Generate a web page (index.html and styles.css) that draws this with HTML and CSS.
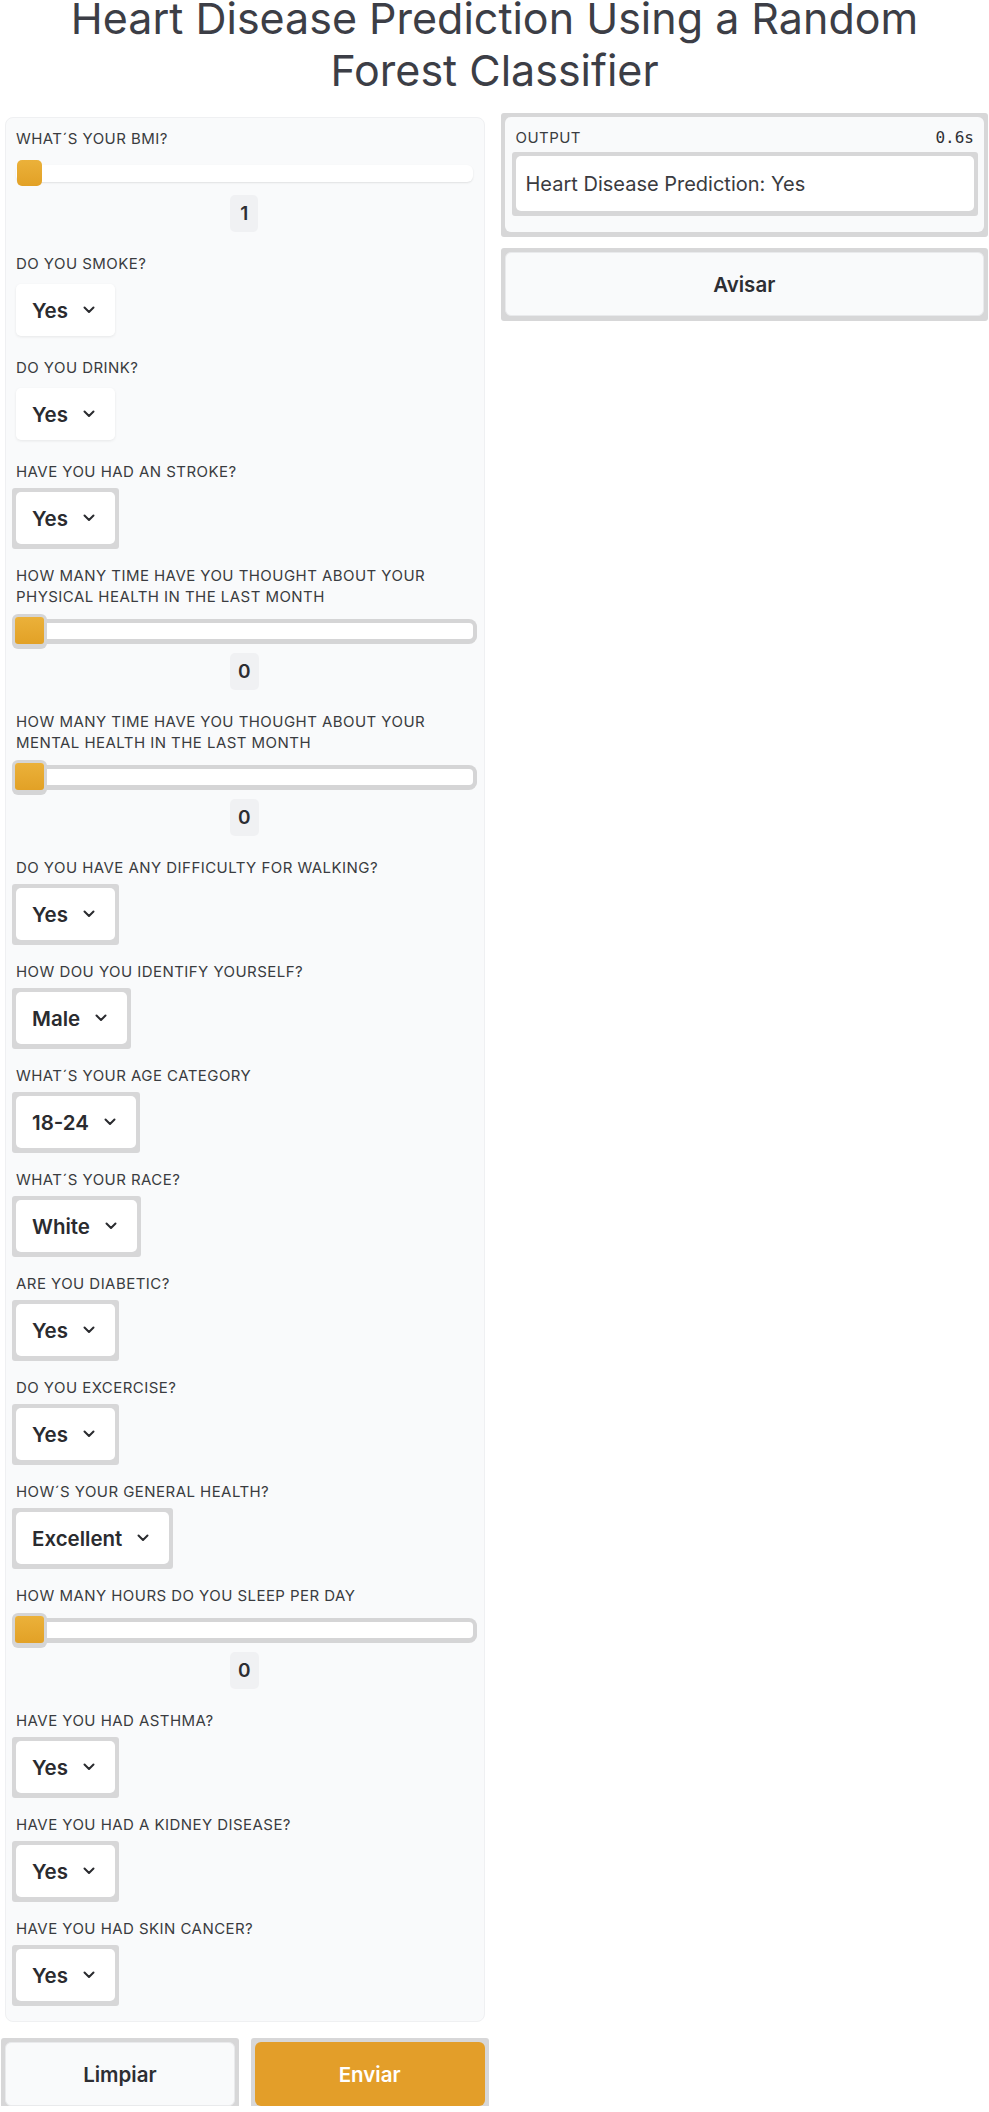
FILE: index.html
```html
<!DOCTYPE html>
<html lang="en">
<head>
<meta charset="utf-8">
<title>Heart Disease Prediction</title>
<link rel="stylesheet" href="styles.css">
</head>
<body>
<div class="page">
  <h1 class="title">Heart Disease Prediction Using a Random<br>Forest Classifier</h1>
  <div class="layout">
    <div class="col">
      <div class="panel">
        <div class="field slider-field">
          <div class="label">WHAT´S YOUR BMI?</div>
          <div class="slider"><div class="track"></div><div class="thumb"></div></div>
          <div class="value">1</div>
        </div>
        <div class="field">
          <div class="label">DO YOU SMOKE?</div>
          <div class="select">Yes<svg class="chev" viewBox="0 0 12 8"><path d="M1.5 1.5 L6 6 L10.5 1.5"/></svg></div>
        </div>
        <div class="field">
          <div class="label">DO YOU DRINK?</div>
          <div class="select">Yes<svg class="chev" viewBox="0 0 12 8"><path d="M1.5 1.5 L6 6 L10.5 1.5"/></svg></div>
        </div>
        <div class="field">
          <div class="label">HAVE YOU HAD AN STROKE?</div>
          <div class="frame"><div class="select">Yes<svg class="chev" viewBox="0 0 12 8"><path d="M1.5 1.5 L6 6 L10.5 1.5"/></svg></div></div>
        </div>
        <div class="field slider-field">
          <div class="label">HOW MANY TIME HAVE YOU THOUGHT ABOUT YOUR PHYSICAL HEALTH IN THE LAST MONTH</div>
          <div class="slider framed"><div class="track"></div><div class="thumb"></div></div>
          <div class="value">0</div>
        </div>
        <div class="field slider-field">
          <div class="label">HOW MANY TIME HAVE YOU THOUGHT ABOUT YOUR MENTAL HEALTH IN THE LAST MONTH</div>
          <div class="slider framed"><div class="track"></div><div class="thumb"></div></div>
          <div class="value">0</div>
        </div>
        <div class="field">
          <div class="label">DO YOU HAVE ANY DIFFICULTY FOR WALKING?</div>
          <div class="frame"><div class="select">Yes<svg class="chev" viewBox="0 0 12 8"><path d="M1.5 1.5 L6 6 L10.5 1.5"/></svg></div></div>
        </div>
        <div class="field">
          <div class="label">HOW DOU YOU IDENTIFY YOURSELF?</div>
          <div class="frame"><div class="select">Male<svg class="chev" viewBox="0 0 12 8"><path d="M1.5 1.5 L6 6 L10.5 1.5"/></svg></div></div>
        </div>
        <div class="field">
          <div class="label">WHAT´S YOUR AGE CATEGORY</div>
          <div class="frame"><div class="select">18-24<svg class="chev" viewBox="0 0 12 8"><path d="M1.5 1.5 L6 6 L10.5 1.5"/></svg></div></div>
        </div>
        <div class="field">
          <div class="label">WHAT´S YOUR RACE?</div>
          <div class="frame"><div class="select">White<svg class="chev" viewBox="0 0 12 8"><path d="M1.5 1.5 L6 6 L10.5 1.5"/></svg></div></div>
        </div>
        <div class="field">
          <div class="label">ARE YOU DIABETIC?</div>
          <div class="frame"><div class="select">Yes<svg class="chev" viewBox="0 0 12 8"><path d="M1.5 1.5 L6 6 L10.5 1.5"/></svg></div></div>
        </div>
        <div class="field">
          <div class="label">DO YOU EXCERCISE?</div>
          <div class="frame"><div class="select">Yes<svg class="chev" viewBox="0 0 12 8"><path d="M1.5 1.5 L6 6 L10.5 1.5"/></svg></div></div>
        </div>
        <div class="field">
          <div class="label">HOW´S YOUR GENERAL HEALTH?</div>
          <div class="frame"><div class="select">Excellent<svg class="chev" viewBox="0 0 12 8"><path d="M1.5 1.5 L6 6 L10.5 1.5"/></svg></div></div>
        </div>
        <div class="field slider-field">
          <div class="label">HOW MANY HOURS DO YOU SLEEP PER DAY</div>
          <div class="slider framed"><div class="track"></div><div class="thumb"></div></div>
          <div class="value">0</div>
        </div>
        <div class="field">
          <div class="label">HAVE YOU HAD ASTHMA?</div>
          <div class="frame"><div class="select">Yes<svg class="chev" viewBox="0 0 12 8"><path d="M1.5 1.5 L6 6 L10.5 1.5"/></svg></div></div>
        </div>
        <div class="field">
          <div class="label">HAVE YOU HAD A KIDNEY DISEASE?</div>
          <div class="frame"><div class="select">Yes<svg class="chev" viewBox="0 0 12 8"><path d="M1.5 1.5 L6 6 L10.5 1.5"/></svg></div></div>
        </div>
        <div class="field">
          <div class="label">HAVE YOU HAD SKIN CANCER?</div>
          <div class="frame"><div class="select">Yes<svg class="chev" viewBox="0 0 12 8"><path d="M1.5 1.5 L6 6 L10.5 1.5"/></svg></div></div>
        </div>
      </div>
      <div class="btn-row">
        <div class="frame block"><div class="btn btn-light">Limpiar</div></div>
        <div class="frame block"><div class="btn btn-primary">Enviar</div></div>
      </div>
    </div>
    <div class="col">
      <div class="frame block">
        <div class="output">
          <div class="out-head"><span class="label">OUTPUT</span><span class="time">0.6s</span></div>
          <div class="frame block inner-frame"><div class="textbox">Heart Disease Prediction: Yes</div></div>
        </div>
      </div>
      <div class="frame block"><div class="btn btn-light">Avisar</div></div>
    </div>
  </div>
</div>
</body>
</html>
```

FILE: styles.css
```css
* { box-sizing: border-box; }

html, body {
  margin: 0;
  padding: 0;
  background: #ffffff;
}

body {
  font-family: "Inter", "Noto Sans", sans-serif;
  color: #3b3d42;
}

.page {
  padding: 0 5px;
}

.title {
  margin: -8px 0 21px;
  font-size: 43px;
  line-height: 52px;
  font-weight: 400;
  text-align: center;
  color: #3c3e46;
}

.layout {
  display: grid;
  grid-template-columns: 1fr 1fr;
  column-gap: 20px;
  align-items: start;
}

.col {
  display: flex;
  flex-direction: column;
  gap: 20px;
}

.panel {
  background: #f9fafb;
  border: 1px solid #eff0f2;
  border-radius: 8px;
  padding: 10px 11px 20px 10px;
  display: flex;
  flex-direction: column;
  gap: 21px;
}

.field {
  display: flex;
  flex-direction: column;
  align-items: flex-start;
}

.slider-field {
  align-items: stretch;
}

.label {
  font-size: 15px;
  line-height: 21px;
  letter-spacing: 0.45px;
  color: #3a3c40;
  text-transform: uppercase;
}

.field > .label {
  margin-bottom: 10px;
}

.slider-field > .label {
  margin-bottom: 11px;
}

/* dropdown */
.select {
  display: inline-flex;
  align-items: center;
  gap: 15px;
  height: 52px;
  padding: 0 20px 0 16px;
  background: #ffffff;
  border-radius: 5px;
  box-shadow: 0 1px 3px rgba(0, 0, 0, 0.08);
  font-size: 20.5px;
  font-weight: 600;
  color: #2a2b2f;
}

.chev {
  width: 12px;
  height: 8px;
  fill: none;
  stroke: #2a2b2f;
  stroke-width: 2;
  stroke-linecap: round;
  stroke-linejoin: round;
}

.frame {
  display: inline-block;
  align-self: flex-start;
  background: #d7d7d8;
  padding: 4px 4px 5px;
  margin: -4px -4px -5px;
  border-radius: 3px;
}

.frame .select {
  box-shadow: none;
}

.frame.block {
  display: block;
  align-self: stretch;
}

/* slider */
.slider {
  position: relative;
  height: 26px;
  display: flex;
  align-items: center;
}

.track {
  width: 100%;
  height: 17px;
  background: #ffffff;
  border-radius: 6px;
  box-shadow: 0 1px 2px rgba(0, 0, 0, 0.1);
}

.thumb {
  position: absolute;
  left: 1px;
  top: 0;
  width: 25px;
  height: 26px;
  border-radius: 5px;
  background: linear-gradient(180deg, #ebb13a 0%, #e2a126 100%);
}

.slider.framed .track {
  height: 16px;
  border-radius: 4px;
  box-shadow: 0 0 0 4px #d5d5d6, 0 1px 0 4px #d5d5d6;
}

.slider.framed .thumb {
  left: -1px;
  top: -1px;
  width: 29px;
  height: 27px;
  border-radius: 3px;
  box-shadow: 0 0 0 3px #d5d5d6, 0 2px 0 3px #d5d5d6;
}

.value {
  align-self: center;
  margin-top: 9px;
  min-width: 28px;
  height: 37px;
  padding: 0 8px;
  border-radius: 5px;
  background: #f0f1f3;
  font-size: 19px;
  font-weight: 600;
  line-height: 37px;
  text-align: center;
  color: #2d2e32;
}

/* buttons */
.btn-row {
  display: grid;
  grid-template-columns: 1fr 1fr;
  column-gap: 20px;
}

.btn {
  height: 64px;
  border-radius: 6px;
  display: flex;
  align-items: center;
  justify-content: center;
  font-size: 20.5px;
  font-weight: 600;
}

.btn-light {
  background: #f9fafb;
  border: 1px solid #e9eaec;
  color: #2d2e33;
}

.btn-primary {
  background: #e39e29;
  color: #ffffff;
}

/* output */
.output {
  background: #f9fafb;
  border-radius: 6px;
  padding: 10px 10px 21px 11px;
}

.out-head {
  display: flex;
  justify-content: space-between;
  align-items: center;
  height: 21px;
  margin-bottom: 8px;
}

.time {
  font-family: "DejaVu Sans Mono", "Liberation Mono", monospace;
  font-size: 16px;
  color: #2f3034;
}

.inner-frame {
  padding: 4px 4px 5px;
}

.textbox {
  height: 55px;
  background: #ffffff;
  border-radius: 5px;
  display: flex;
  align-items: center;
  padding: 0 10px;
  font-size: 20px;
  color: #3a3b40;
}
```
